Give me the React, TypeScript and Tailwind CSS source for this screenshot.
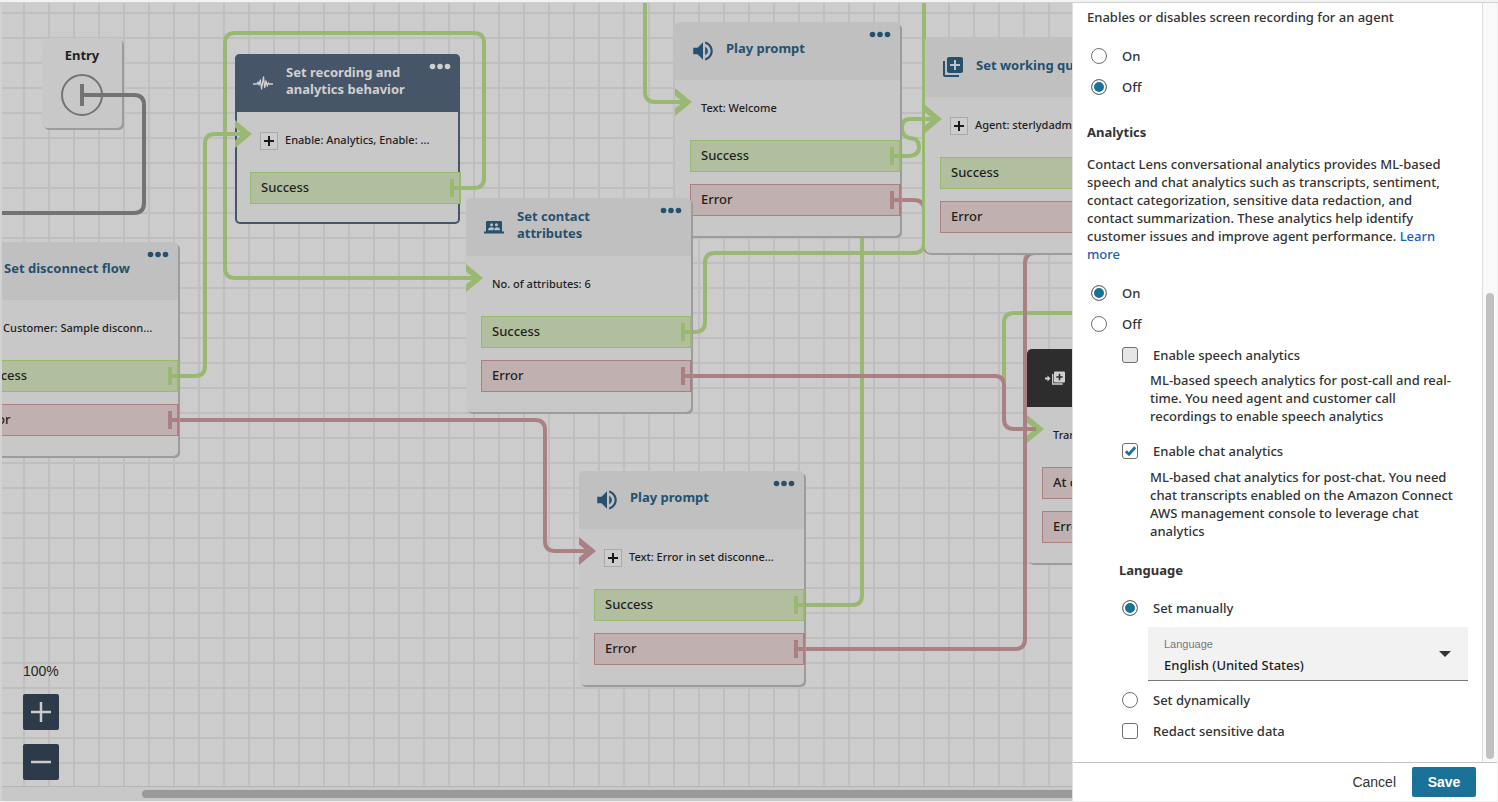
import { useState, type ReactNode } from 'react'
import { MdLibraryAdd, MdVolumeUp } from 'react-icons/md'

type Tone = 'green' | 'red'
type Branch = { label: string; tone: Tone }

type FlowNode = {
  id: string
  x: number
  y: number
  title: string
  icon: ReactNode
  detail: string
  expandable?: boolean
  arrow?: Tone
  shaft?: Tone
  variant?: 'plain' | 'selected' | 'dark'
  tall?: boolean
  branches: Branch[]
}

const GREEN = '#99b972'
const RED = '#ab8082'
const toneColor = { green: GREEN, red: RED }

function WaveIcon() {
  return (
    <svg width="20" height="14" viewBox="0 0 20 14" fill="none" stroke="currentColor" strokeWidth="1.3" strokeLinejoin="round">
      <path d="M0 8H4L5 6 6 9 7.300 4 8.600 13 10.500 0.800 11.700 11.500 13 5 14.300 10 15.500 6.800 16.500 8H20" />
    </svg>
  )
}

function AttributesIcon() {
  return (
    <svg width="20" height="13" viewBox="0 0 20 13">
      <path fill="currentColor" d="M3.200 0h13.600q1.200 0 1.200 1.200V10.500h2V12.500H0v-2h2V1.200Q2 0 3.200 0z" />
      <g fill="#c0c0c0">
        <circle cx="7.600" cy="3.800" r="1.500" />
        <circle cx="12.400" cy="3.800" r="1.500" />
        <path d="M4 9.200q0-2.900 3.600-2.900 1.800 0 2.600.9-.8.700-.8 2z" />
        <path d="M10.200 9.200q0-2.900 2.800-2.900 3 0 3 2.900z" />
      </g>
    </svg>
  )
}

function TransferIcon() {
  return (
    <svg width="20" height="14" viewBox="0 0 20 14" fill="none">
      <path d="M0 7.500h3" stroke="currentColor" strokeWidth="2" />
      <path d="M2.500 4.500 5.500 7.500l-3 3z" fill="currentColor" />
      <path d="M7.700 3v10h10" stroke="currentColor" strokeWidth="1.300" />
      <rect x="9" y="0.500" width="11" height="11" rx="1" fill="currentColor" />
      <path d="M14.500 2.800v6.400M11.300 6h6.400" stroke="#2d2d2d" strokeWidth="1.600" />
    </svg>
  )
}

const nodes: FlowNode[] = [
  {
    id: 'disconnect', x: -47, y: 242, title: 'Set disconnect flow', icon: null,
    detail: 'Customer: Sample disconn...', expandable: true,
    branches: [{ label: 'Success', tone: 'green' }, { label: 'Error', tone: 'red' }],
  },
  {
    id: 'recording', x: 235, y: 54, title: 'Set recording and analytics behavior', icon: <WaveIcon />,
    detail: 'Enable: Analytics, Enable: ...', expandable: true, arrow: 'green', shaft: 'green', variant: 'selected',
    branches: [{ label: 'Success', tone: 'green' }],
  },
  {
    id: 'welcome', x: 675, y: 22, title: 'Play prompt', icon: <MdVolumeUp size={26} />,
    detail: 'Text: Welcome', arrow: 'green', shaft: 'green',
    branches: [{ label: 'Success', tone: 'green' }, { label: 'Error', tone: 'red' }],
  },
  {
    id: 'attributes', x: 466, y: 198, title: 'Set contact attributes', icon: <AttributesIcon />,
    detail: 'No. of attributes: 6', arrow: 'green', shaft: 'green',
    branches: [{ label: 'Success', tone: 'green' }, { label: 'Error', tone: 'red' }],
  },
  {
    id: 'working', x: 925, y: 37, title: 'Set working queue', icon: <MdLibraryAdd size={24} />,
    detail: 'Agent: sterlydadmin', expandable: true, arrow: 'green', shaft: 'green', tall: true,
    branches: [{ label: 'Success', tone: 'green' }, { label: 'Error', tone: 'red' }],
  },
  {
    id: 'errorPrompt', x: 579, y: 471, title: 'Play prompt', icon: <MdVolumeUp size={26} />,
    detail: 'Text: Error in set disconne...', expandable: true, arrow: 'red', shaft: 'red',
    branches: [{ label: 'Success', tone: 'green' }, { label: 'Error', tone: 'red' }],
  },
  {
    id: 'transfer', x: 1027, y: 349, title: 'Transfer to queue', icon: <TransferIcon />,
    detail: 'Transfer to queue', arrow: 'green', shaft: 'red', variant: 'dark',
    branches: [{ label: 'At capacity', tone: 'red' }, { label: 'Error', tone: 'red' }],
  },
]

const edges: { d: string; color: string }[] = [
  { color: '#737373', d: 'M100 95H134Q144 95 144 105V203Q144 213 134 213H0' },
  { color: GREEN, d: 'M170 376H195Q205 376 205 366V144Q205 134 215 134H240' },
  { color: GREEN, d: 'M450 188H474Q484 188 484 178V43Q484 33 474 33H235Q225 33 225 43V268Q225 278 235 278H470' },
  { color: GREEN, d: 'M645 0V92Q645 102 655 102H680' },
  { color: RED, d: 'M890 200H914Q924 200 924 210V243Q924 253 934 253H940' },
  { color: GREEN, d: 'M680 332H695Q705 332 705 322V263Q705 253 715 253H914Q924 253 924 243V0' },
  { color: GREEN, d: 'M890 156H908Q919 156 919 147Q919 138 909 138Q902 136 902 128Q902 119 910 119H940' },
  { color: GREEN, d: 'M800 605H852Q862 605 862 595V220' },
  { color: GREEN, d: 'M1080 313H1014Q1004 313 1004 323V420' },
  { color: RED, d: 'M170 420H535Q545 420 545 430V541Q545 551 555 551H585' },
  { color: RED, d: 'M680 376H995Q1004 376 1004 386V419Q1004 429 1014 429H1030' },
  { color: RED, d: 'M800 649H1015Q1025 649 1025 639V264Q1025 253 1035 253H1038' },
]

function BranchRow({ label, tone }: Branch) {
  const look =
    tone === 'green'
      ? 'border-[#99b972] bg-[#b2bf9f]'
      : 'border-[#ab8082] bg-[#c0b1b0]'
  return (
    <li className={`relative flex h-8 items-center border border-r-2 pl-[10px] text-[13px] font-medium ${look}`}>
      {label}
      <svg className="absolute right-[-2px] top-1.5" width="11" height="18" viewBox="0 0 11 18">
        <path d="M0 0h4v7h7v4H4v7H0z" fill={toneColor[tone]} />
      </svg>
    </li>
  )
}

function NodeCard({ node }: { node: FlowNode }) {
  const variant = node.variant ?? 'plain'
  const header = {
    plain: 'bg-[#c0c0c0] text-[#25516e]',
    selected: 'bg-[#475569] text-[#d0d0d0]',
    dark: 'bg-[#2d2d2d] text-[#d0d0d0]',
  }[variant]
  return (
    <article
      className={`absolute w-[225px] rounded-[5px] bg-[#c8c8c8] text-[#1f1f1f] ${
        variant === 'selected' ? 'shadow-[inset_0_0_0_2px_#475569]' : 'shadow-[2px_2px_0_#9c9c9c]'
      }`}
      style={{ left: node.x, top: node.y }}
    >
      <header className={`relative flex rounded-t-[5px] ${node.tall ? 'h-[60px]' : 'h-[58px]'} ${header}`}>
        <span className="flex w-[51px] shrink-0 items-center justify-center pl-[5px]">{node.icon}</span>
        <h2
          className={`w-[140px] text-[13px] font-bold leading-[17px] ${
            node.title.length > 19 ? 'pt-[10px]' : node.tall ? 'whitespace-nowrap pt-5' : 'whitespace-nowrap pt-[18px]'
          }`}
        >
          {node.title}
        </h2>
        <button type="button" aria-label="Block options" className="absolute right-[9px] top-[9px]">
          <svg className="block" width="22" height="7" viewBox="0 0 22 7" fill="currentColor">
            <circle cx="3.500" cy="3.500" r="2.800" />
            <circle cx="11" cy="3.500" r="2.800" />
            <circle cx="18.500" cy="3.500" r="2.800" />
          </svg>
        </button>
      </header>
      <div className={`flex h-[58px] items-center whitespace-nowrap text-[11px] font-medium ${node.expandable ? 'gap-[7px] pl-[25px]' : 'pl-[26px]'}`}>
        {node.expandable && (
          <button
            type="button"
            aria-label="Expand"
            className="flex h-[18px] w-[18px] items-center justify-center border border-[#aaaaaa] bg-[#cccccc]"
          >
            <svg width="10" height="10" viewBox="0 0 10 10" stroke="#1a1a1a" strokeWidth="2">
              <path d="M5 0v10M0 5h10" />
            </svg>
          </button>
        )}
        <p className="pb-0.5">{node.detail}</p>
      </div>
      <ul className="-mr-px flex flex-col gap-3 pb-5 pl-[15px] pt-0.5">
        {node.branches.map((b) => (
          <BranchRow key={b.label} {...b} />
        ))}
      </ul>
      {node.arrow && (
        <svg
          className={`absolute left-0 ${node.tall ? 'top-[68px]' : 'top-[66px]'}`}
          width="18"
          height="28"
          viewBox="0 0 18 28"
        >
          <path d="M0 0 17 14 0 28V20.500L8 14 0 7.500z" fill={toneColor[node.arrow]} />
          <path d="M0 12H9V16H0z" fill={toneColor[node.shaft ?? node.arrow]} />
        </svg>
      )}
    </article>
  )
}

function Canvas() {
  return (
    <main className="relative flex min-w-0 flex-1 flex-col overflow-hidden border-l-2 border-[#d2d2d2] bg-[#cccccc]">
      <div className="relative min-h-0 flex-1 overflow-hidden">
        <div className="absolute -left-0.5 -top-[3px]">
          <svg className="block" width="2000" height="1400">
            <defs>
              <pattern id="grid" width="25" height="25" x="23" y="12" patternUnits="userSpaceOnUse">
                <path d="M0 0H25V2H2V25H0z" fill="#bfbfbf" />
              </pattern>
            </defs>
            <rect width="2000" height="1400" fill="url(#grid)" />
            <g fill="none" strokeWidth="4">
              {edges.map((e) => (
                <path key={e.d} d={e.d} stroke={e.color} />
              ))}
            </g>
          </svg>
          <article className="absolute left-[42px] top-[38px] flex h-[90px] w-20 flex-col items-center rounded-[5px] bg-[#c8c8c8] pt-2 shadow-[2px_2px_0_#9c9c9c]">
            <h2 className="text-[13px] font-bold leading-[18px] text-[#1f1f1f]">Entry</h2>
            <svg className="absolute left-[19px] top-9" width="64" height="42" viewBox="0 0 64 42" fill="none" stroke="#737373">
              <circle cx="21" cy="21" r="20" strokeWidth="2" />
              <path d="M21 10V32M21 21H64" strokeWidth="4" />
            </svg>
          </article>
          {nodes.map((n) => (
            <NodeCard key={n.id} node={n} />
          ))}
        </div>
        <div className="absolute bottom-1.5 left-[21px] flex flex-col">
          <output className="mb-[14px] font-['Liberation_Sans',sans-serif] text-sm leading-[18px] text-[#262626]">100%</output>
          <button type="button" aria-label="Zoom in" className="mb-[14px] flex h-9 w-9 items-center justify-center rounded-[2px] bg-[#2d3a49] text-[#cccccc]">
            <svg width="20" height="20" viewBox="0 0 20 20" stroke="currentColor" strokeWidth="2.500">
              <path d="M10 0v20M0 10h20" />
            </svg>
          </button>
          <button type="button" aria-label="Zoom out" className="flex h-9 w-9 items-center justify-center rounded-[2px] bg-[#2d3a49] text-[#cccccc]">
            <svg width="20" height="20" viewBox="0 0 20 20" stroke="currentColor" strokeWidth="2.500">
              <path d="M0 10h20" />
            </svg>
          </button>
        </div>
      </div>
      <div className="flex h-[15px] shrink-0 items-center border-t border-[#b5b5b5] bg-[#c8c8c8] pl-[140px]">
        <div className="h-2 flex-1 rounded-l-full bg-[#999999]" />
      </div>
    </main>
  )
}

type ChoiceProps = { label: string; checked: boolean; onChange: () => void; name?: string; disabled?: boolean }

function Radio({ label, checked, onChange, name }: ChoiceProps) {
  return (
    <label className="flex h-[31px] items-center gap-[15px]">
      <input
        type="radio"
        name={name}
        checked={checked}
        onChange={onChange}
        className="h-4 w-4 shrink-0 appearance-none rounded-full border border-[#6f6f6f] bg-white checked:bg-[#1b7299] checked:shadow-[inset_0_0_0_2px_#ffffff]"
      />
      {label}
    </label>
  )
}

function Checkbox({ label, checked, onChange, disabled }: ChoiceProps) {
  return (
    <label className="flex h-[31px] items-center gap-[15px]">
      <span className="relative flex h-4 w-4 shrink-0">
        <input
          type="checkbox"
          checked={checked}
          onChange={onChange}
          disabled={disabled}
          className="h-4 w-4 appearance-none rounded-[3px] border border-[#6f6f6f] bg-white disabled:bg-[#e6e6e6]"
        />
        {checked && (
          <svg className="pointer-events-none absolute left-0 top-0" width="16" height="16" viewBox="0 0 16 16" fill="none">
            <path d="M3.800 8.200 7 11.200 13.200 4.200" stroke="#1b7299" strokeWidth="2.800" />
          </svg>
        )}
      </span>
      {label}
    </label>
  )
}

function SettingsPanel() {
  const [screen, setScreen] = useState(false)
  const [analytics, setAnalytics] = useState(true)
  const [chat, setChat] = useState(true)
  const [manual, setManual] = useState(true)
  const [redact, setRedact] = useState(false)
  return (
    <aside className="flex w-[426px] shrink-0 flex-col border-x border-l-[#e0e0e0] border-r-[#f2f2f2] bg-white text-[13px] font-medium leading-[18px] text-[#333333]">
      <div className="flex min-h-0 flex-1">
        <div className="min-w-0 flex-1 overflow-hidden px-[14px] pt-[5px]">
          <p>Enables or disables screen recording for an agent</p>
          <div className="mt-[14px] pl-1">
            <Radio name="screen" label="On" checked={screen} onChange={() => setScreen(true)} />
            <Radio name="screen" label="Off" checked={!screen} onChange={() => setScreen(false)} />
          </div>
          <h3 className="mt-[21px] font-bold">Analytics</h3>
          <p className="mt-[14px] pr-4">
            Contact Lens conversational analytics provides ML-based speech and chat analytics such as transcripts,
            sentiment, contact categorization, sensitive data redaction, and contact summarization. These analytics help
            identify customer issues and improve agent performance.{' '}
            <a href="#learn-more" className="text-[#1a5dba]">
              Learn more
            </a>
          </p>
          <div className="mt-[14px] pl-1">
            <Radio name="analytics" label="On" checked={analytics} onChange={() => setAnalytics(true)} />
            <Radio name="analytics" label="Off" checked={!analytics} onChange={() => setAnalytics(false)} />
          </div>
          <div className="pl-[35px]">
            <Checkbox label="Enable speech analytics" checked={false} onChange={() => {}} disabled />
            <p className="mt-px pl-7 pr-2">
              ML-based speech analytics for post-call and real-time. You need agent and customer call recordings to
              enable speech analytics
            </p>
            <div className="mt-[10px]">
              <Checkbox label="Enable chat analytics" checked={chat} onChange={() => setChat(!chat)} />
            </div>
            <p className="mt-0.5 pl-7 pr-2">
              ML-based chat analytics for post-chat. You need chat transcripts enabled on the Amazon Connect AWS
              management console to leverage chat analytics
            </p>
          </div>
          <h3 className="mt-[21px] pl-8 font-bold">Language</h3>
          <div className="mt-[13px] pl-[35px]">
            <Radio name="language-mode" label="Set manually" checked={manual} onChange={() => setManual(true)} />
            <div className="relative ml-[26px] mt-1 mb-[3px]">
              <label
                htmlFor="language"
                className="pointer-events-none absolute left-4 top-2 font-['Liberation_Sans',sans-serif] text-[11px] font-normal text-[#777777]"
              >
                Language
              </label>
              <select
                id="language"
                className="block h-[54px] w-full appearance-none border-b border-[#7a7a7a] bg-[#f2f2f2] pb-1 pl-4 pt-[26px] text-[13px] font-medium text-[#1f1f1f]"
              >
                <option>English (United States)</option>
              </select>
              <svg className="pointer-events-none absolute right-[17px] top-6" width="12" height="6" viewBox="0 0 12 6">
                <path d="M0 0h12L6 6z" fill="#333333" />
              </svg>
            </div>
            <Radio name="language-mode" label="Set dynamically" checked={!manual} onChange={() => setManual(false)} />
            <Checkbox label="Redact sensitive data" checked={redact} onChange={() => setRedact(!redact)} />
          </div>
        </div>
        <div className="flex w-[15px] shrink-0 flex-col justify-end border-l border-[#dddddd] bg-[#f9f9f9] pb-[3px] pl-[3px]">
          <div className="h-[61.6%] w-2 rounded-full bg-[#c1c1c1]" />
        </div>
      </div>
      <footer className="flex h-[39px] shrink-0 items-center justify-end gap-4 border-t border-[#c4c4c4] pr-[21px] font-['Liberation_Sans',sans-serif] text-sm font-normal">
        <button type="button">Cancel</button>
        <button type="button" className="h-[30px] w-16 rounded-[2px] bg-[#1b7299] font-bold text-white">
          Save
        </button>
      </footer>
    </aside>
  )
}

export default function App() {
  return (
    <div className="flex h-screen flex-col border-b border-[#f0f0f0] font-['Noto_Sans',sans-serif]">
      <div className="h-[3px] shrink-0 border-b border-[#d0d0d0] bg-[#f3f3f3]" />
      <div className="flex min-h-0 flex-1">
        <Canvas />
        <SettingsPanel />
      </div>
    </div>
  )
}
